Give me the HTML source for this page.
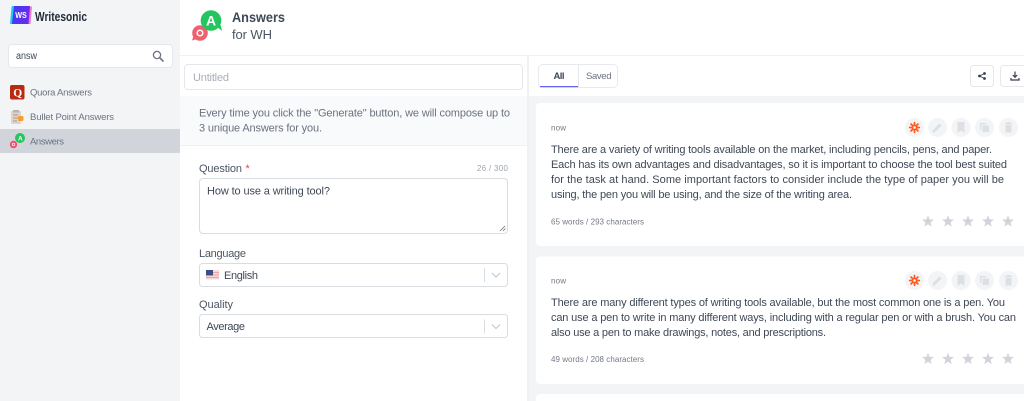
<!DOCTYPE html>
<html><head><meta charset="utf-8"><title>Writesonic Answers</title>
<style>
html,body{margin:0;padding:0;width:1024px;height:401px;overflow:hidden;background:#fff}
svg{display:block;filter:blur(.3px)}
text{font-family:"Liberation Sans",sans-serif;font-size:11px;fill:#3f4856;white-space:pre}
.g{fill:#6b7280}.s{font-size:8px;fill:#737a86}.b{font-weight:bold}
.ic{fill:#dcdfe4}.c{fill:#f3f4f6}.st{fill:#d1d5db}
</style></head><body>
<svg width="1024" height="401" viewBox="0 0 1024 401" xmlns="http://www.w3.org/2000/svg">
<defs>
<linearGradient id="lg" x1="0" y1="0" x2="1" y2="0.3"><stop offset="0" stop-color="#3b3df0"/><stop offset="1" stop-color="#6a2bf0"/></linearGradient>
<g id="tools">
<circle class="c" cx="914.5" cy="0" r="9.5"/><circle class="c" cx="937.5" cy="0" r="9.5"/><circle class="c" cx="961" cy="0" r="9.5"/><circle class="c" cx="984.5" cy="0" r="9.5"/><circle class="c" cx="1008.5" cy="0" r="9.5"/>
<g stroke="#ff5a1f" stroke-width="1.8" stroke-linecap="round"><path d="M914.5-4.800V4.800M909.700 0H919.300M911.100-3.400L917.900 3.400M917.900-3.400L911.100 3.400"/></g>
<circle cx="914.5" cy="0" r="2.900" fill="#ff5a1f"/><circle cx="914.5" cy="0" r="1.300" fill="#f3f4f6"/>
<path class="ic" d="M932.500 5V3L939.500-4L941.500-2L934.500 5Z"/>
<path class="ic" d="M957.500-5.500H964.500V5.500L961 3L957.500 5.500Z"/>
<path class="ic" d="M980-4.500H986V-3H981.500V2.500H980Z M982.500-2H989V4.500H982.500Z"/>
<path class="ic" d="M1005-3.500H1012V-4.700H1010L1009.500-5.500H1007.500L1007-4.700H1005Z M1005.500-2.700H1011.500V5H1005.500Z"/>
</g>
<path id="star" d="M0-6.300L1.590-2.180L5.990-1.950L2.570.83L3.700 5.100L0 2.700L-3.700 5.100L-2.570.83L-5.990-1.950L-1.590-2.180Z"/>
<g id="stars" class="st">
<use href="#star" x="928"/><use href="#star" x="948"/><use href="#star" x="968"/><use href="#star" x="988"/><use href="#star" x="1008"/>
</g>
</defs>

<!-- sidebar -->
<rect x="0" y="0" width="180" height="401" fill="#f3f4f6"/>
<path d="M12.500 6H20L18 24H10.500Q10 24 10 23L11.500 7Q11.600 6 12.500 6Z" fill="#22c7f5"/>
<path d="M24 6.500H32L30.500 24H22Z" fill="#f07ac8"/>
<path d="M14 6H30L28.500 24H12Z" fill="url(#lg)"/>
<text x="15.300" y="18" textLength="11.500" lengthAdjust="spacingAndGlyphs" style="font-size:8px;font-weight:bold;fill:#fff">WS</text>
<text x="35" y="21" textLength="52" lengthAdjust="spacingAndGlyphs" class="b" style="font-size:12.500px;fill:#1f2937">Writesonic</text>

<rect x="8.500" y="44.500" width="164" height="23" rx="3.500" fill="#fff" stroke="#e5e7eb"/>
<text x="16" y="59" textLength="21" lengthAdjust="spacingAndGlyphs" style="font-size:10px">answ</text>
<circle cx="157" cy="55" r="3.600" fill="none" stroke="#6b7280" stroke-width="1.300"/>
<path d="M159.700 57.700L163 61" stroke="#6b7280" stroke-width="1.600" stroke-linecap="round"/>

<rect x="0" y="129" width="180" height="24" fill="#d1d5db"/>
<rect x="10" y="85" width="14.500" height="14.500" rx="2" fill="#b92b10"/>
<text x="13.200" y="96.500" style="font-size:11.500px;font-weight:bold;fill:#fff;font-family:'Liberation Serif',serif">Q</text>
<text x="30" y="95.500" textLength="62" class="g" style="font-size:9.500px">Quora Answers</text>
<rect x="11" y="111" width="10" height="13" rx="1" fill="#d9d5d0"/>
<rect x="13" y="110" width="6" height="2.500" fill="#b9b4ae"/>
<path d="M13 115H18M13 118H18M13 121H17" stroke="#c98f70" stroke-width="1"/>
<rect x="18" y="116" width="5.500" height="5" rx="1.500" fill="#f59e2c"/>
<text x="30" y="120" textLength="84" class="g" style="font-size:9.500px">Bullet Point Answers</text>
<circle cx="13.500" cy="144.500" r="3.700" fill="#f0506e"/>
<circle cx="13.500" cy="144.500" r="1.300" fill="none" stroke="#fff" stroke-width=".7"/>
<circle cx="20" cy="138" r="5" fill="#22c55e"/>
<text x="18" y="140.500" style="font-size:6.500px;font-weight:bold;fill:#fff">A</text>
<text x="30" y="144.500" textLength="34" class="g" style="font-size:9.500px">Answers</text>

<!-- header -->
<rect x="180" y="55" width="844" height="1" fill="#eef0f2"/>
<circle cx="200" cy="33" r="7.800" fill="#f0606f"/>
<path d="M193.500 36L192 40.500L197 39Z" fill="#f0606f"/>
<circle cx="200" cy="33" r="2.800" fill="none" stroke="#fff" stroke-width="1.500"/>
<circle cx="211" cy="20.500" r="10.300" fill="#22c55e"/>
<path d="M217 27L222 31L220 23Z" fill="#22c55e"/>
<text x="206" y="25.500" class="b" style="font-size:14px;fill:#fff">A</text>
<text x="232" y="22" textLength="53" lengthAdjust="spacingAndGlyphs" class="b" style="font-size:13.500px">Answers</text>
<text x="232" y="39" textLength="40" style="font-size:13px;fill:#4b5563">for WH</text>

<!-- left col -->
<rect x="184.500" y="64.500" width="338" height="25" rx="3.500" fill="#fff" stroke="#e5e7eb"/>
<text x="193" y="81" textLength="36" style="font-size:11px;fill:#a8aeb8">Untitled</text>
<rect x="180" y="96" width="347" height="49" fill="#f9fafb"/>
<rect x="180" y="145" width="347" height="1" fill="#eef0f2"/>
<rect x="527" y="56" width="2" height="345" fill="#f0f1f3"/>
<text x="199" y="116.500" textLength="311" class="g">Every time you click the "Generate" button, we will compose up to</text>
<text x="199" y="131.500" textLength="123" class="g">3 unique Answers for you.</text>

<text x="199" y="172" textLength="43" style="font-size:11px;fill:#4b5563">Question</text>
<text x="245.500" y="172" style="font-size:11px;fill:#ef4444">*</text>
<text x="477" y="171" textLength="31" style="font-size:8px;fill:#9ca3af">26 / 300</text>
<rect x="199.500" y="178.500" width="308" height="55" rx="3.500" fill="#fff" stroke="#d9dce1"/>
<text x="207" y="194.500" textLength="123">How to use a writing tool?</text>
<path d="M500 231L505 226M503 231L505.500 228.500" stroke="#6b7280" stroke-width=".8"/>

<text x="199" y="257" textLength="47" style="font-size:11px;fill:#4b5563">Language</text>
<rect x="199.500" y="263.500" width="308" height="23" rx="3" fill="#fff" stroke="#d9dce1"/>
<rect x="206" y="270" width="13" height="9.500" fill="#f7d9d9"/>
<path d="M206 272.500H219M206 275H219M206 277.500H219" stroke="#e8a3a3" stroke-width="1"/>
<rect x="206" y="270" width="7" height="5.500" fill="#3b4f86"/>
<text x="224" y="279" textLength="34">English</text>
<rect x="484" y="268" width="1" height="14" fill="#d9dce1"/>
<path d="M492 273L496 277L500 273" fill="none" stroke="#c4c8ce" stroke-width="1.100"/>

<text x="199" y="308" textLength="34" style="font-size:11px;fill:#4b5563">Quality</text>
<rect x="199.500" y="314.500" width="308" height="23" rx="3" fill="#fff" stroke="#d9dce1"/>
<text x="206.500" y="330" textLength="38.500">Average</text>
<rect x="484" y="319.500" width="1" height="14" fill="#d9dce1"/>
<path d="M492 324.500L496 328.500L500 324.500" fill="none" stroke="#c4c8ce" stroke-width="1.100"/>

<!-- right col -->
<rect x="529" y="96" width="495" height="305" fill="#f3f4f6"/>
<rect x="538.500" y="64.500" width="79" height="23" rx="4" fill="#fff" stroke="#e8eaed"/>
<rect x="578" y="65" width="1" height="22" fill="#e5e7eb"/>
<rect x="540" y="86" width="38" height="1.200" fill="#6366f1"/>
<text x="553.500" y="79" textLength="11" class="b" style="font-size:9.500px">All</text>
<text x="586" y="79" textLength="25.500" style="font-size:9.500px;fill:#6b7280">Saved</text>

<rect x="970.500" y="65.500" width="23" height="21" rx="3" fill="#fff" stroke="#e5e7eb"/>
<circle cx="979.500" cy="76" r="1.400" fill="#374151"/><circle cx="984.500" cy="73.500" r="1.400" fill="#374151"/><circle cx="984.500" cy="78.500" r="1.400" fill="#374151"/>
<path d="M979.500 76L984.500 73.500M979.500 76L984.500 78.500" stroke="#374151" stroke-width=".9"/>
<rect x="1000.500" y="65.500" width="40" height="21" rx="3" fill="#fff" stroke="#e5e7eb"/>
<path d="M1015 71.500V77M1012.800 75L1015 77.300L1017.200 75M1011 78V80H1019V78" fill="none" stroke="#374151" stroke-width="1.200"/>

<!-- card 1 -->
<rect x="536" y="103" width="500" height="143" rx="4" fill="#fff"/>
<text x="551" y="130.500" textLength="15" class="s">now</text>
<use href="#tools" y="127.500"/>
<text x="551" y="153" textLength="441">There are a variety of writing tools available on the market, including pencils, pens, and paper.</text>
<text x="551" y="168" textLength="456">Each has its own advantages and disadvantages, so it is important to choose the tool best suited</text>
<text x="551" y="183" textLength="453">for the task at hand. Some important factors to consider include the type of paper you will be</text>
<text x="551" y="198" textLength="301">using, the pen you will be using, and the size of the writing area.</text>
<text x="551" y="224.500" textLength="93" class="s">65 words / 293 characters</text>
<use href="#stars" y="221.500"/>

<!-- card 2 -->
<rect x="536" y="256.500" width="500" height="127.500" rx="4" fill="#fff"/>
<text x="551" y="283.500" textLength="15" class="s">now</text>
<use href="#tools" y="280.500"/>
<text x="551" y="306" textLength="454">There are many different types of writing tools available, but the most common one is a pen. You</text>
<text x="551" y="321" textLength="465">can use a pen to write in many different ways, including with a regular pen or with a brush. You can</text>
<text x="551" y="336" textLength="275">also use a pen to make drawings, notes, and prescriptions.</text>
<text x="551" y="362" textLength="93" class="s">49 words / 208 characters</text>
<use href="#stars" y="359"/>

<!-- card 3 -->
<rect x="536" y="394" width="500" height="20" rx="4" fill="#fff"/>
</svg>
</body></html>
